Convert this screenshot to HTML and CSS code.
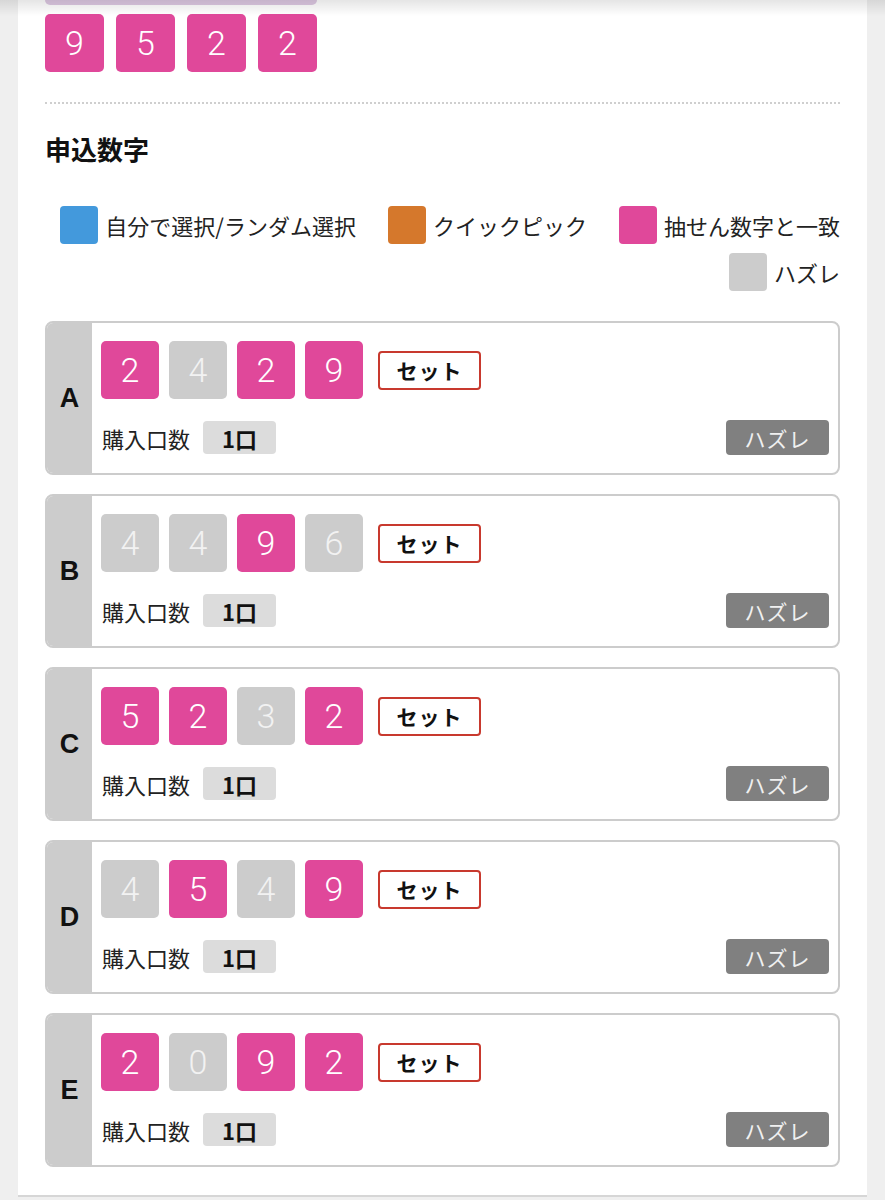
FILE: index.html
```html
<!DOCTYPE html>
<html lang="ja">
<head>
<meta charset="utf-8">
<link rel="stylesheet" href="styles.css">
</head>
<body>
<div class="topshade"></div>
<div class="panel">
  <div class="prev-btn"></div>
  <div class="digits win">
    <span class="d hit">9</span><span class="d hit">5</span><span class="d hit">2</span><span class="d hit">2</span>
  </div>
  <hr class="dots">
  <h2 class="title">申込数字</h2>
  <div class="legend">
    <div class="li"><span class="sq blue"></span>自分で選択/ランダム選択</div>
    <div class="li"><span class="sq orange"></span>クイックピック</div>
    <div class="li"><span class="sq pink"></span>抽せん数字と一致</div>
    <div class="li"><span class="sq gray"></span>ハズレ</div>
  </div>

  <div class="card">
    <div class="label">A</div>
    <div class="body">
      <div class="row1">
        <span class="d hit">2</span><span class="d miss">4</span><span class="d hit">2</span><span class="d hit">9</span>
        <span class="set">セット</span>
      </div>
      <div class="row2">
        <div class="qty">購入口数<span class="kuchi">1口</span></div>
        <span class="result">ハズレ</span>
      </div>
    </div>
  </div>

  <div class="card">
    <div class="label">B</div>
    <div class="body">
      <div class="row1">
        <span class="d miss">4</span><span class="d miss">4</span><span class="d hit">9</span><span class="d miss">6</span>
        <span class="set">セット</span>
      </div>
      <div class="row2">
        <div class="qty">購入口数<span class="kuchi">1口</span></div>
        <span class="result">ハズレ</span>
      </div>
    </div>
  </div>

  <div class="card">
    <div class="label">C</div>
    <div class="body">
      <div class="row1">
        <span class="d hit">5</span><span class="d hit">2</span><span class="d miss">3</span><span class="d hit">2</span>
        <span class="set">セット</span>
      </div>
      <div class="row2">
        <div class="qty">購入口数<span class="kuchi">1口</span></div>
        <span class="result">ハズレ</span>
      </div>
    </div>
  </div>

  <div class="card">
    <div class="label">D</div>
    <div class="body">
      <div class="row1">
        <span class="d miss">4</span><span class="d hit">5</span><span class="d miss">4</span><span class="d hit">9</span>
        <span class="set">セット</span>
      </div>
      <div class="row2">
        <div class="qty">購入口数<span class="kuchi">1口</span></div>
        <span class="result">ハズレ</span>
      </div>
    </div>
  </div>

  <div class="card">
    <div class="label">E</div>
    <div class="body">
      <div class="row1">
        <span class="d hit">2</span><span class="d miss">0</span><span class="d hit">9</span><span class="d hit">2</span>
        <span class="set">セット</span>
      </div>
      <div class="row2">
        <div class="qty">購入口数<span class="kuchi">1口</span></div>
        <span class="result">ハズレ</span>
      </div>
    </div>
  </div>
</div>
</body>
</html>
```

FILE: styles.css
```css
* { box-sizing: border-box; }
html, body { margin: 0; padding: 0; }
body {
  background: #efefef;
  font-family: "Noto Sans CJK JP", "Noto Sans", sans-serif;
  color: #111;
  position: relative;
  min-height: 1200px;
}
.topshade {
  position: absolute;
  top: 0; left: 0; right: 0;
  height: 16px;
  background: linear-gradient(to bottom, rgba(0,0,0,0.10), rgba(0,0,0,0));
  z-index: 5;
}
.panel {
  width: 849px;
  margin: 0 0 0 18px;
  background: #fff;
  padding: 0 27px 28px;
  border-bottom: 2px solid #d6d6d6;
}
.prev-btn {
  width: 272px;
  height: 5px;
  background: #ddc8e2;
  border-radius: 0 0 10px 10px;
}
.digits { display: flex; gap: 12px; margin-top: 9px; }
.win .d { width: 59px; }
.d {
  width: 58px;
  height: 58px;
  border-radius: 5px;
  display: flex;
  align-items: center;
  justify-content: center;
  font-family: "Roboto", "Liberation Sans", sans-serif;
  font-weight: 300;
  font-size: 34px;
  color: #fff;
}
.hit { background: #e0489a; }
.miss { background: #cccccc; color: #f2f2f2; }
.dots {
  border: 0;
  border-top: 2px dotted #cfcfcf;
  margin: 30px 0 0;
  height: 0;
}
.title {
  margin: 0;
  padding: 28px 0 0;
  font-size: 26px;
  line-height: 34px;
  font-weight: 700;
  color: #111;
}
.legend {
  display: flex;
  flex-wrap: wrap;
  justify-content: flex-end;
  column-gap: 32px;
  row-gap: 9px;
  margin-top: 40px;
}
.li {
  display: flex;
  align-items: center;
  gap: 7px;
  font-size: 22px;
  line-height: 38px;
  color: #222;
}
.sq { width: 38px; height: 38px; border-radius: 4px; display: inline-block; }
.blue { background: #4399dc; }
.orange { background: #d5782c; }
.pink { background: #e0489a; }
.gray { background: #cccccc; }
.card {
  display: flex;
  border: 2px solid #cccccc;
  border-radius: 8px;
  overflow: hidden;
  margin-top: 30px;
  height: 154px;
}
.card + .card { margin-top: 19px; }
.label {
  width: 45px;
  background: #cccccc;
  display: flex;
  align-items: center;
  justify-content: center;
  font-family: "Liberation Sans", "Noto Sans", sans-serif;
  font-weight: 700;
  font-size: 27px;
  color: #111;
}
.body {
  flex: 1;
  padding: 18px 9px 18px 9px;
  display: flex;
  flex-direction: column;
  justify-content: space-between;
}
.row1 { display: flex; align-items: center; gap: 10px; }
.set {
  margin-left: 5px;
  width: 103px;
  height: 39px;
  border: 2px solid #c8392e;
  border-radius: 4px;
  display: flex;
  align-items: center;
  justify-content: center;
  font-weight: 700;
  font-size: 21px;
  letter-spacing: 1px;
  color: #111;
}
.row2 { display: flex; align-items: center; justify-content: space-between; }
.qty {
  display: flex;
  align-items: center;
  font-size: 22px;
  color: #222;
  padding-left: 1px;
}
.kuchi {
  margin-left: 13px;
  width: 73px;
  height: 33px;
  background: #dcdcdc;
  border-radius: 4px;
  display: flex;
  align-items: center;
  justify-content: center;
  font-weight: 700;
  font-size: 22px;
  color: #111;
}
.result {
  width: 103px;
  height: 35px;
  background: #808080;
  border-radius: 4px;
  display: flex;
  align-items: center;
  justify-content: center;
  font-size: 21px;
  color: #f0f0f0;
  letter-spacing: 1px;
}
```
